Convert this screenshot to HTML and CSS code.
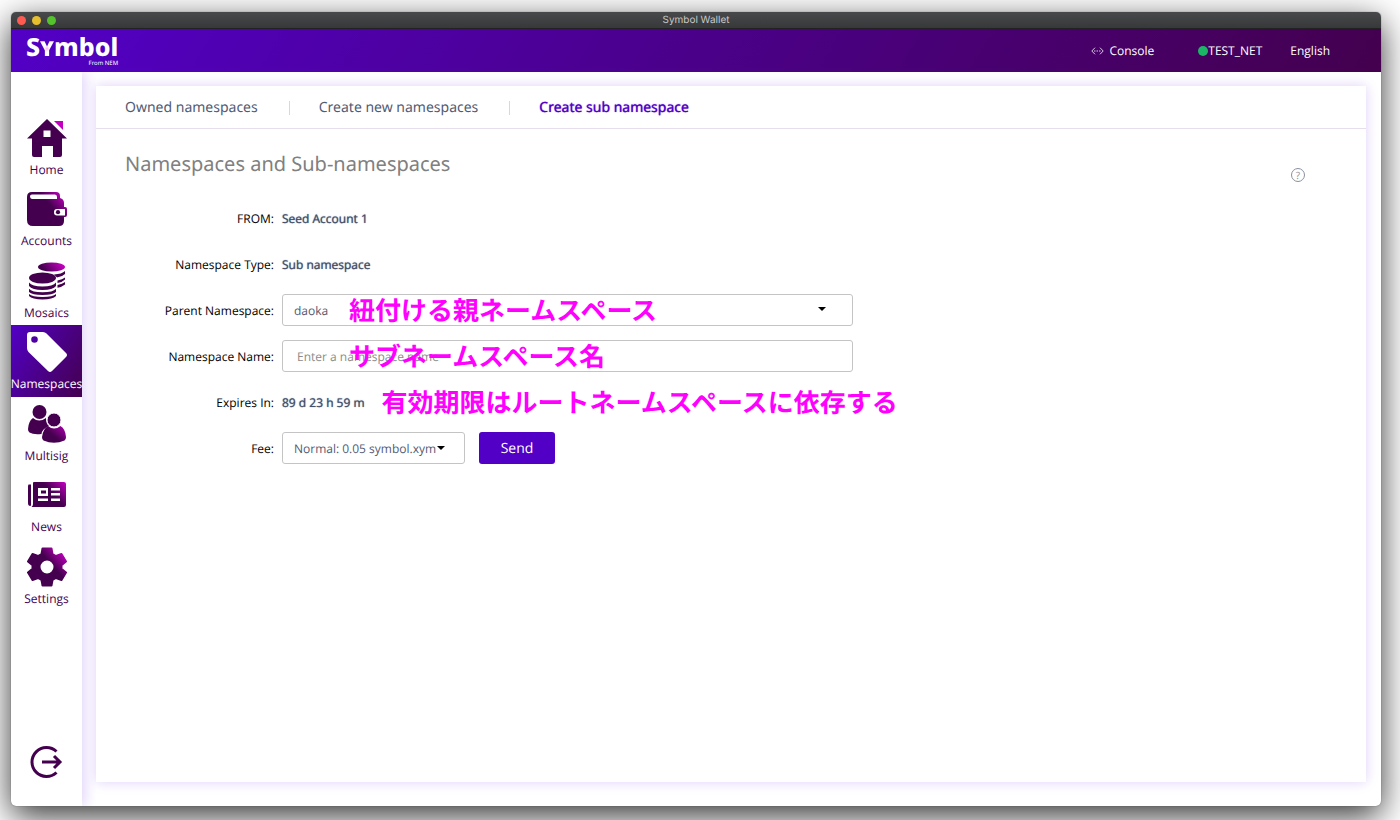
FILE: index.html
```html
<!DOCTYPE html>
<html lang="en">
  <head>
    <meta charset="UTF-8" />
    <meta name="viewport" content="width=device-width, initial-scale=1.0" />
    <title>Symbol Wallet</title>
    <link rel="stylesheet" href="styles.css">
  </head>
  <body>
    <!-- shared icon gradient -->
    <svg class="defs" width="0" height="0" aria-hidden="true">
      <defs>
        <linearGradient id="pink" gradientUnits="userSpaceOnUse" x1="39" y1="4" x2="24" y2="17">
          <stop offset="0" stop-color="#d400cf" />
          <stop offset="1" stop-color="#44004e" />
        </linearGradient>
      </defs>
    </svg>

    <div class="window">
      <div class="titlebar">
        <div class="lights">
          <span class="light red"></span>
          <span class="light yellow"></span>
          <span class="light green"></span>
        </div>
        <p class="window-title">Symbol Wallet</p>
      </div>

      <header class="header">
        <div class="logo">
          <p class="logo-name">S<span class="logo-y">y</span>mbol</p>
          <p class="logo-sub">From NEM</p>
        </div>
        <div class="header-menu">
          <button class="header-btn console" type="button">
            <svg width="13" height="8" viewBox="0 0 13 8" fill="none" stroke="#d9c8e4">
              <path d="M4 .7.8 4 4 7.300M9 .7 12.200 4 9 7.300" />
              <path d="M3 4h7" stroke-dasharray="1.500 1" />
            </svg>
            Console
          </button>
          <button class="header-btn network" type="button"><span class="dot"></span>TEST_NET</button>
          <button class="header-btn" type="button">English</button>
        </div>
      </header>

      <div class="body">
        <aside class="sidebar">
          <nav class="nav">
            <a class="nav-item" href="#">
              <svg class="icon" viewBox="0 0 40 40" fill="url(#pink)">
                <path fill="#c400c0" d="M27 3h9v9z" />
                <path fill="#44004e" fill-rule="evenodd" d="M20 1 40 20.500h-5V37q0 2-2 2h-7V28H15v11H7q-2 0-2-2V20.500H0zM16.500 12.500v6.500h7v-6.500z" />
              </svg>
              <span>Home</span>
            </a>
            <a class="nav-item" href="#">
              <svg class="icon" viewBox="0 0 40 40" fill="url(#pink)">
                <path fill-rule="evenodd" d="M5 3h24q4 0 4 4v2q4 1 4 5v4h1q2 0 2 2v6q0 2-2 2h-1v4q0 5-5 5H6q-6 0-6-6V8q0-5 5-5zM5 5.500Q3 5.500 3 7.500T5 10h25V8q0-2.500-2-2.500zM30 20q-3 0-3 3.200t3 3.200h8V20z" />
                <circle cx="31" cy="23.200" r="2.100" fill="#44004e" />
              </svg>
              <span>Accounts</span>
            </a>
            <a class="nav-item" href="#">
              <svg class="icon" viewBox="0 0 40 40" fill="#44004e">
                <ellipse cx="24.500" cy="6" rx="13.500" ry="4.500" fill="url(#pink)" />
                <path d="M38 10v3q-3 3-8 3.500l-3-3q8-.5 11-3.500zM38 16.500v2q-3 3-7.500 3.500v-2.500q5-.8 7.500-3zM38 21v2.500q-3 2.500-7.500 3.300V24q5-.8 7.500-3z" />
                <ellipse cx="15.500" cy="17" rx="13.500" ry="5.500" />
                <path d="M2 21.500q3 4 13.500 4T29 21.500V25q-3 4-13.500 4T2 25zM2 27.700q3 3.500 13.500 3.500T29 27.700V31q-3 3-13.500 3T2 31zM2 33q3 3 13.500 3T29 33v2q-3 3.400-13.500 3.400T2 35z" />
              </svg>
              <span>Mosaics</span>
            </a>
            <a class="nav-item active" href="#">
              <svg class="icon" viewBox="0 0 40 40" fill="#fff">
                <path fill-rule="evenodd" d="M3 0h13q2 0 3.500 1.500L39 21q2 2 0 4L25 39q-2 2-4 0L1.500 20Q0 18.500 0 16V3q0-3 3-3zM7.500 4.200a3.300 3.300 0 1 0 0 6.600 3.300 3.300 0 1 0 0-6.600z" />
              </svg>
              <span>Namespaces</span>
            </a>
            <a class="nav-item" href="#">
              <svg class="icon" viewBox="0 0 40 40" fill="#44004e">
                <circle cx="12.500" cy="8" r="7" />
                <path d="M6 14q6 5 13 0 0 6 3 8-7 3-7.500 8-8 1-12-1.500Q1 28 1 25q.5-8 5-11z" />
                <circle cx="27" cy="16" r="7" stroke="#fff" />
                <path fill="url(#multi)" d="M21 22q6 5 12.500 0 5 3 5.500 11 0 3-1.500 3.500-10.500 4.500-21 0Q15 36 15 33q1-8 6-11z" />
                <defs>
                  <linearGradient id="multi" x1="1" y1="0" x2=".4" y2=".5">
                    <stop offset="0" stop-color="#b000b0" />
                    <stop offset="1" stop-color="#44004e" />
                  </linearGradient>
                </defs>
              </svg>
              <span>Multisig</span>
            </a>
            <a class="nav-item" href="#">
              <svg class="icon" viewBox="0 0 40 40" fill="url(#pink)">
                <path d="M1.500 9.500H4v20.500q0 1-.8 1Q1 31 1 28V11z" />
                <path fill-rule="evenodd" d="M7 7h30q2 0 2 2v21q0 2-2 2H4.500Q6 31 6 29V8q0-1 1-1zM11 13v8h10v-8zM24 13v2.500h9V13zM24 18v2.500h9V18zM11 23.500V26h10v-2.500zM24 23.500V26h9v-2.500zM14 15.500h5v3h-5z" />
              </svg>
              <span>News</span>
            </a>
            <a class="nav-item" href="#">
              <svg class="icon" viewBox="0 0 40 40" fill="url(#pink)">
                <path fill-rule="evenodd" stroke="url(#pink)" stroke-width="2" stroke-linejoin="round" d="M15.500 1.500h9l1 5.500 3.500 2 5.500-2 4.500 7.500-4.500 3.700v3.600l4.500 3.700-4.500 7.500-5.500-2-3.500 2-1 5.500h-9l-1-5.500-3.500-2-5.500 2L1 25.500l4.500-3.700v-3.600L1 14.500 5.500 7l5.500 2 3.500-2zM20 12.500a7.500 7.500 0 1 0 0 15 7.500 7.500 0 1 0 0-15z" />
              </svg>
              <span>Settings</span>
            </a>
          </nav>
          <button class="logout" type="button" aria-label="Log out">
            <svg width="34" height="34" viewBox="0 0 34 34" fill="none" stroke="#44004e" stroke-width="3">
              <path d="M26.500 6.500a14.500 14.500 0 1 0 0 21" />
              <path d="M12 17h18M24 11l6 6-6 6" />
            </svg>
          </button>
        </aside>

        <main class="main">
          <div class="card">
            <nav class="tabs">
              <a class="tab" href="#">Owned namespaces</a>
              <a class="tab" href="#">Create new namespaces</a>
              <a class="tab current" href="#">Create sub namespace</a>
            </nav>

            <div class="content">
              <div class="heading">
                <h1>Namespaces and Sub-namespaces</h1>
                <button class="help" type="button" aria-label="Help">?</button>
              </div>

              <form class="form">
                <div class="row">
                  <span class="label">FROM:</span>
                  <span class="value">Seed Account 1</span>
                </div>
                <div class="row">
                  <span class="label">Namespace Type:</span>
                  <span class="value">Sub namespace</span>
                </div>
                <div class="row">
                  <label class="label" for="parent">Parent Namespace:</label>
                  <div class="field wide">
                    <select id="parent">
                      <option>daoka</option>
                    </select>
                    <svg class="caret" width="8" height="4" viewBox="0 0 8 4"><path d="M0 0h8L4 4z" /></svg>
                    <span class="note over" lang="ja">紐付ける親ネームスペース</span>
                  </div>
                </div>
                <div class="row">
                  <label class="label" for="name">Namespace Name:</label>
                  <div class="field wide">
                    <input id="name" type="text" placeholder="Enter a namespace name" />
                    <span class="note over" lang="ja">サブネームスペース名</span>
                  </div>
                </div>
                <div class="row">
                  <span class="label">Expires In:</span>
                  <span class="value">89 d 23 h 59 m</span>
                  <span class="note" lang="ja">有効期限はルートネームスペースに依存する</span>
                </div>
                <div class="row">
                  <label class="label" for="fee">Fee:</label>
                  <div class="field fee">
                    <select id="fee">
                      <option>Normal: 0.05 symbol.xym</option>
                    </select>
                    <svg class="caret" width="8" height="4" viewBox="0 0 8 4"><path d="M0 0h8L4 4z" /></svg>
                  </div>
                  <button class="send" type="button">Send</button>
                </div>
              </form>
            </div>
          </div>
        </main>
      </div>
    </div>
  </body>
</html>
```
FILE: styles.css
```css
* {
  margin: 0;
  padding: 0;
  box-sizing: border-box;
}

body {
  min-height: 100vh;
  padding: 12px 19px 14px 11px;
  display: flex;
  background: #fff;
  font-family: "Open Sans", "Noto Sans CJK JP", sans-serif;
  font-size: 12px;
  text-rendering: geometricPrecision;
  overflow: hidden;
}

button,
input,
select {
  font: inherit;
  text-rendering: inherit;
  border: none;
  background: none;
}

a {
  color: inherit;
  text-decoration: none;
}

.defs {
  position: absolute;
}

.window {
  flex: 1;
  display: flex;
  flex-direction: column;
  border-radius: 5px;
  background: #fff;
  box-shadow: 0 0 1px #444, 0 10px 34px rgba(0, 0, 0, 0.8);
}

/* title bar */
.titlebar {
  height: 17px;
  display: grid;
  grid-template-columns: 1fr auto 1fr;
  align-items: center;
  padding: 0 6px;
  border-radius: 5px 5px 0 0;
  background: linear-gradient(#47494b, #363839);
  border-bottom: 1px solid #222;
}

.lights {
  display: flex;
  gap: 6px;
}

.light {
  width: 9px;
  height: 9px;
  border-radius: 50%;
}

.red {
  background: #fc5b52;
}

.yellow {
  background: #e6bf2e;
}

.green {
  background: #53c22b;
}

.window-title {
  color: #c8c8c8;
  font-family: Inter, sans-serif;
  font-size: 10px;
}

/* header */
.header {
  height: 43px;
  display: flex;
  justify-content: space-between;
  align-items: center;
  padding: 0 51px 0 15px;
  color: #fff;
  background: linear-gradient(120deg, #5200c6, #44004e);
}

.logo {
  display: flex;
  flex-direction: column;
  font-family: "Noto Sans", sans-serif;
}

.logo-name {
  font-size: 25px;
  font-weight: 800;
  line-height: 24px;
}

.logo-y {
  font-variant: small-caps;
  color: transparent;
  background: radial-gradient(circle at 50% 55%, #ffb4f2 0, #fff 3px);
  -webkit-background-clip: text;
  background-clip: text;
}

.logo-sub {
  font-size: 6px;
  line-height: 8px;
  text-align: right;
}

.header-menu {
  display: flex;
  align-items: center;
}

.header-btn {
  display: flex;
  align-items: center;
  color: #fff;
  margin-left: 28px;
}

.console {
  gap: 5px;
  margin-right: 16px;
}

.dot {
  width: 10px;
  height: 10px;
  border-radius: 50%;
  background: #1bb566;
}

.body {
  flex: 1;
  display: flex;
}

/* sidebar */
.sidebar {
  width: 71px;
  display: flex;
  flex-direction: column;
  justify-content: space-between;
  padding: 39px 0 27px;
  box-shadow: 4px 0 12px #e4d8fa;
  clip-path: inset(0 -14px 0 0);
}

.nav {
  height: 500px;
  display: grid;
  grid-template-columns: 100%;
  grid-template-rows: repeat(7, 1fr);
}

.nav-item {
  display: flex;
  flex-direction: column;
  align-items: center;
  gap: 4px;
  padding-top: 7px;
  color: #44004e;
  line-height: 16px;
}

.nav-item.active {
  color: #fff;
  background: linear-gradient(120deg, #5200c6, #44004e);
}

.icon {
  width: 40px;
  height: 40px;
}

.logout {
  align-self: center;
  height: 34px;
}

/* main card */
.main {
  flex: 1;
  display: flex;
  padding: 14px 15px 24px 14px;
}

.card {
  flex: 1;
  background: #fff;
  box-shadow: 0 0 12px #dfcff8;
}

.tabs {
  display: flex;
  align-items: center;
  height: 43px;
  padding: 2px 29px 0;
  border-bottom: 1px solid #e6deec;
  color: #515b73;
  font-family: "Noto Sans", sans-serif;
  font-size: 14px;
}

.tab {
  line-height: 14px;
}

.tab + .tab {
  margin-left: 31px;
  padding-left: 29px;
  border-left: 1px solid #ddd0f5;
}

.tab.current {
  color: #5200c6;
  text-shadow: 0 0 1px #5200c6;
}

.content {
  padding: 21px 29px;
}

.heading {
  display: flex;
  justify-content: space-between;
  align-items: flex-start;
  padding-right: 32px;
}

h1 {
  color: #808080;
  font-family: "Noto Sans", sans-serif;
  font-size: 20px;
  font-weight: 400;
  line-height: 28px;
}

.help {
  width: 14px;
  height: 14px;
  margin-top: 18px;
  border: 1px solid #8c90a0;
  border-radius: 50%;
  color: #8c90a0;
  font-size: 10px;
  line-height: 12px;
}

/* form */
.form {
  display: flex;
  flex-direction: column;
  gap: 14px;
  margin-top: 20px;
}

.row {
  display: flex;
  align-items: center;
  height: 32px;
}

.label {
  width: 149px;
  margin-right: 8px;
  text-align: right;
  color: #000;
}

.value {
  color: #44506b;
  text-shadow: 0 0 1px #44506b;
}

.field {
  position: relative;
}

.wide {
  width: 571px;
}

.fee {
  width: 183px;
}

.field select,
.field input {
  width: 100%;
  height: 32px;
  padding: 0 11px;
  border: 1px solid #c4c4c4;
  border-radius: 3px;
  color: #515b73;
  background: #fff;
  appearance: none;
}

.field input {
  padding: 0 14px;
}

.field input::placeholder {
  color: #8c8c8c;
}

.caret {
  position: absolute;
  top: 13px;
  right: 27px;
}

.fee .caret {
  top: 14px;
  right: 20px;
}

.note {
  margin-left: 17px;
  color: #ff00ff;
  font-family: "Noto Sans CJK JP", sans-serif;
  font-size: 26px;
  font-weight: 700;
  line-height: 32px;
  white-space: nowrap;
}

.over {
  position: absolute;
  top: 0;
  left: 67px;
  margin: 0;
  pointer-events: none;
}

.send {
  width: 76px;
  height: 32px;
  margin-left: 14px;
  border-radius: 3px;
  color: #fff;
  background: #5200c6;
  font-size: 14px;
}
```
